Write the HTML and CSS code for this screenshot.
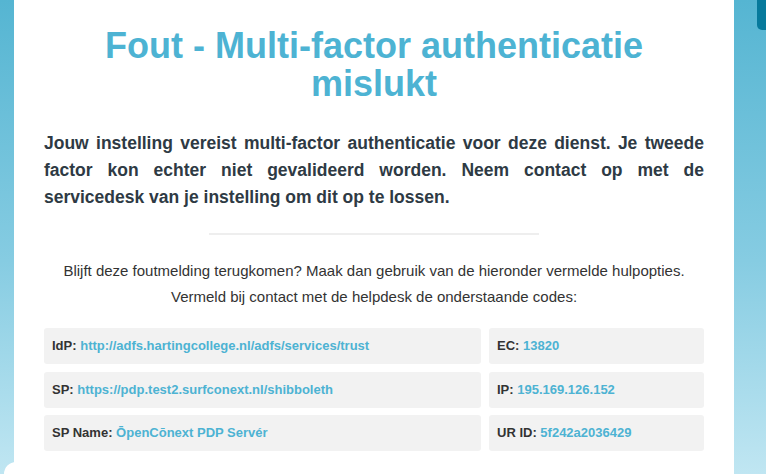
FILE: index.html
```html
<!DOCTYPE html>
<html lang="nl">
<head>
<meta charset="utf-8">
<title>Fout - Multi-factor authenticatie mislukt</title>
<link rel="stylesheet" href="styles.css">
</head>
<body>
<div class="tab"></div>
<div class="corner"></div>
<main class="card">
  <h1 class="title">Fout - Multi-factor authenticatie mislukt</h1>
  <p class="lead">Jouw instelling vereist multi-factor authenticatie voor deze dienst. Je tweede factor kon echter niet gevalideerd worden. Neem contact op met de servicedesk van je instelling om dit op te lossen.</p>
  <hr class="sep">
  <p class="help">Blijft deze foutmelding terugkomen? Maak dan gebruik van de hieronder vermelde hulpopties.<br>Vermeld bij contact met de helpdesk de onderstaande codes:</p>
  <div class="codes">
    <div class="cell"><span class="label">IdP:</span> <span class="value">http://adfs.hartingcollege.nl/adfs/services/trust</span></div>
    <div class="cell"><span class="label">EC:</span> <span class="value">13820</span></div>
    <div class="cell"><span class="label">SP:</span> <span class="value">https://pdp.test2.surfconext.nl/shibboleth</span></div>
    <div class="cell"><span class="label">IP:</span> <span class="value">195.169.126.152</span></div>
    <div class="cell"><span class="label">SP Name:</span> <span class="value">ŌpenCōnext PDP Servér</span></div>
    <div class="cell"><span class="label">UR ID:</span> <span class="value">5f242a2036429</span></div>
  </div>
</main>
</body>
</html>
```

FILE: styles.css
```css
*, *::before, *::after {
  box-sizing: border-box;
}
html, body {
  margin: 0;
  padding: 0;
}
body {
  width: 766px;
  height: 474px;
  overflow: hidden;
  background: linear-gradient(to bottom, #55b5d2 0%, #86cce2 55%, #c0e6f2 100%);
  font-family: "Liberation Sans", Arial, sans-serif;
  color: #333;
  position: relative;
}
.tab {
  position: absolute;
  top: 0;
  left: 757px;
  width: 14px;
  height: 30px;
  background: #077a9c;
  border-radius: 0 0 0 5px;
}
.corner {
  position: absolute;
  left: 4px;
  top: 462px;
  width: 40px;
  height: 12px;
  background: #fff;
  border-radius: 14px 0 0 0;
}
.card {
  position: relative;
  margin-left: 14px;
  width: 720px;
  height: 474px;
  background: #fff;
  padding: 27px 30px 0;
}
.title {
  margin: 0;
  text-align: center;
  color: #4db3d3;
  font-size: 36px;
  line-height: 38px;
  font-weight: bold;
}
.lead {
  margin: 27px 0 0;
  font-size: 17.5px;
  line-height: 27px;
  font-weight: bold;
  text-align: justify;
  color: #2e3a44;
}
.sep {
  width: 330px;
  margin: 22px auto 0;
  border: 0;
  border-top: 2px solid #eeeeee;
  height: 0;
}
.help {
  margin: 23px 0 0;
  text-align: center;
  font-size: 15px;
  line-height: 26px;
  color: #333;
}
.codes {
  margin-top: 18px;
  display: grid;
  grid-template-columns: 437px 215px;
  column-gap: 8px;
  row-gap: 7.5px;
}
.cell {
  height: 36px;
  line-height: 36px;
  background: #f2f2f2;
  border-radius: 3px;
  padding: 0 8px;
  font-size: 13px;
  font-weight: bold;
  white-space: nowrap;
}
.label {
  color: #333;
}
.value {
  color: #4db3d3;
}
```
